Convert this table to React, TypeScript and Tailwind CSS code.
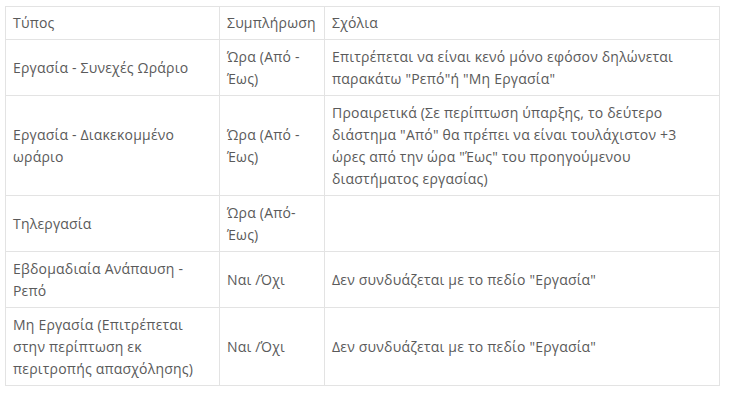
const rows: [string, string, string][] = [
  ["Εργασία - Συνεχές Ωράριο", "Ώρα (Από - Έως)", 'Επιτρέπεται να είναι κενό μόνο εφόσον δηλώνεται παρακάτω "Ρεπό"ή "Μη Εργασία"'],
  [
    "Εργασία - Διακεκομμένο ωράριο",
    "Ώρα (Από - Έως)",
    'Προαιρετικά (Σε περίπτωση ύπαρξης, το δεύτερο διάστημα "Από" θα πρέπει να είναι τουλάχιστον +3 ώρες από την ώρα "Έως" του προηγούμενου διαστήματος εργασίας)',
  ],
  ["Τηλεργασία", "Ώρα (Από- Έως)", ""],
  ["Εβδομαδιαία Ανάπαυση - Ρεπό", "Ναι /Όχι", 'Δεν συνδυάζεται με το πεδίο "Εργασία"'],
  ["Μη Εργασία (Επιτρέπεται στην περίπτωση εκ περιτροπής απασχόλησης)", "Ναι /Όχι", 'Δεν συνδυάζεται με το πεδίο "Εργασία"'],
];

const cell = "border border-[#e3e3e3] px-[7px] py-[5.5px] align-middle";
const head = "border border-[#e3e3e3] px-[7px] py-[5px] text-left font-normal";

export default function App() {
  return (
    <div className="min-h-screen bg-white pt-[6px] pl-[5px] font-['Open_Sans',sans-serif] text-[14px] leading-[22px] tracking-[0.2px] text-[#5a5a5a]">
      <table className="table-fixed border-collapse w-[714px]">
        <colgroup>
          <col className="w-[214px]" />
          <col className="w-[105px]" />
          <col className="w-[395px]" />
        </colgroup>
        <thead>
          <tr>
            <th className={head}>Τύπος</th>
            <th className={head}>Συμπλήρωση</th>
            <th className={head}>Σχόλια</th>
          </tr>
        </thead>
        <tbody>
          {rows.map(([type, fill, note]) => (
            <tr key={type}>
              <td className={cell}>{type}</td>
              <td className={cell}>{fill}</td>
              <td className={cell}>{note}</td>
            </tr>
          ))}
        </tbody>
      </table>
    </div>
  );
}
